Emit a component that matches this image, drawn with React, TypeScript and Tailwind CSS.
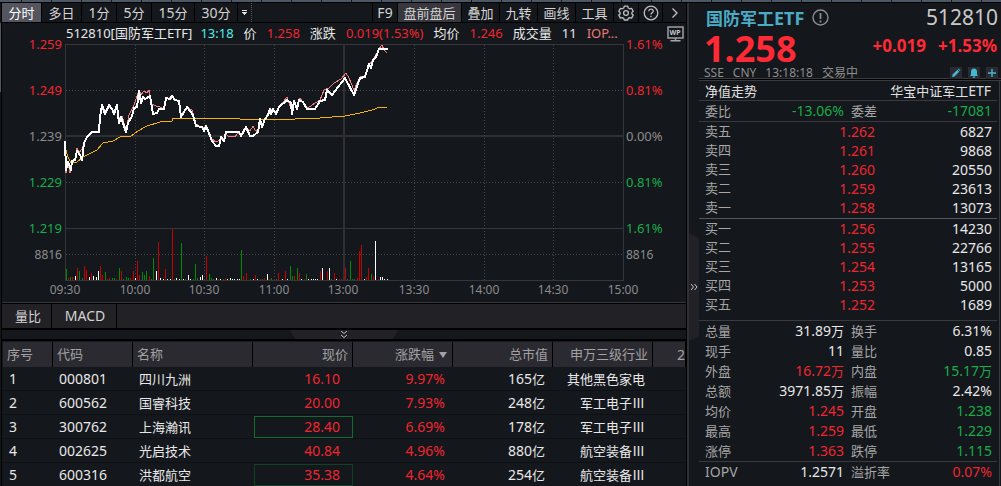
import React from 'react';

const UP = 'text-[#f0262f]';
const DOWN = 'text-[#18ad4a]';
const PLAIN = 'text-[#e8e8e8]';

// Chinese runs are set one pixel smaller than the digits around them
const Mixed = ({ text }: { text: string }) => (
  <>
    {text.split(/([\u2160-\u9fff]+)/).map((part, i) =>
      i % 2 ? <span key={i} className="text-[13px]">{part}</span> : part
    )}
  </>
);

const periods = [
  { label: '分时', width: 'w-[40px]' },
  { label: '多日', width: 'w-[40px]' },
  { label: '1分', width: 'w-[35px]' },
  { label: '5分', width: 'w-[35px]' },
  { label: '15分', width: 'w-[43px]' },
  { label: '30分', width: 'w-[43px]' },
];

const tools = [
  { label: 'F9', width: 'w-[25px]' },
  { label: '盘前盘后', width: 'w-[64px]' },
  { label: '叠加', width: 'w-[38px]' },
  { label: '九转', width: 'w-[38px]' },
  { label: '画线', width: 'w-[38px]' },
  { label: '工具', width: 'w-[38px]' },
];

const TopBar = () => (
  <nav className="flex h-[20px] border-b border-black text-[14px] leading-none text-[#d4d4d4]">
    {periods.map((p, i) => (
      <button
        key={p.label}
        className={`${p.width} flex shrink-0 items-center justify-center border-r border-black ${i === 0 ? 'bg-[#55555f] text-white' : ''}`}
      >
        <span><Mixed text={p.label} /></span>
      </button>
    ))}
    <button aria-label="更多周期" className="flex w-[14px] items-center justify-center border-r border-dotted border-[#555]">
      <svg width="7" height="6" viewBox="0 0 7 6" fill="#e0e0e0" shapeRendering="crispEdges">
        <path d="M1 0h5v1H1zM1 2h5v1H1zM2 3h3v1H2zM3 4h1v1H3z" />
      </svg>
    </button>
    <div className="flex-1 border-r border-black" />
    {tools.map((t, i) => (
      <button
        key={t.label}
        className={`${t.width} flex shrink-0 items-center justify-center border-r border-black ${i === 1 ? 'bg-[#37373d]' : ''}`}
      >
        <span><Mixed text={t.label} /></span>
      </button>
    ))}
    <button aria-label="设置" className="flex w-[25px] items-center justify-center border-r border-black">
      <svg width="16" height="16" viewBox="0 0 16 16" fill="none" stroke="#bdbdbd" strokeWidth="1.3">
        <path d="M6.3 1.2h3.4l.6 1.8 1.4.8 1.9-.5 1.6 3-1.3 1.2v1.400l1.300 1.200-1.600 3-1.900-.5-1.400.8-.6 1.600H6.300l-.6-1.600-1.400-.8-1.900.5-1.600-3 1.300-1.200V7.500L.8 6.300l1.600-3 1.900.5L5.700 3z" strokeLinejoin="round" />
        <circle cx="8" cy="8" r="2.4" />
      </svg>
    </button>
    <button aria-label="帮助" className="flex w-[24px] items-center justify-center border-r border-black">
      <svg width="16" height="16" viewBox="0 0 16 16" fill="none" stroke="#bdbdbd" strokeWidth="1.3">
        <circle cx="8" cy="8" r="6.8" />
        <path d="M5.8 6.3c0-1.3 1-2.1 2.2-2.1s2.2.8 2.2 2c0 1.5-2.2 1.7-2.2 3.300M8 10.800v1.400" />
      </svg>
    </button>
    <button aria-label="展开" className="flex w-[23px] items-center justify-center">
      <svg width="8" height="12" viewBox="0 0 8 12" fill="none" stroke="#c4c4c4" strokeWidth="1.3">
        <path d="M1.5 1.500L6 6l-4.500 4.500" />
      </svg>
    </button>
  </nav>
);

const InfoLine = () => (
  <div className="flex h-[21px] items-center justify-between pl-[64px] pr-[2px] text-[13px] leading-none">
    <div className="flex items-center gap-[10px] whitespace-nowrap text-[#e8e8e8]">
      <span className="-mr-[2px]">512810[国防军工ETF]</span>
      <span className="text-[#4ff0e8]">13:18</span>
      <span>价</span>
      <span className={UP}>1.258</span>
      <span>涨跌</span>
      <span className={UP}>0.019(1.53%)</span>
      <span>均价</span>
      <span className={UP}>1.246</span>
      <span>成交量</span>
      <span>11</span>
      <span className="text-[#f07878]">IOP...</span>
    </div>
    <svg width="17" height="16" viewBox="0 0 17 16" fill="none" stroke="#a8a8a8">
      <rect x="1" y="1" width="15" height="11" strokeWidth="1.4" />
      <path d="M8.5 12v2.500M3.500 14.800h10" strokeWidth="1.4" />
      <text x="8" y="9" textAnchor="middle" fontSize="7" fontWeight="700" fill="#c4c4c4" stroke="none">WP</text>
    </svg>
  </div>
);

const pricePoints =
  '65,141 66,170 68,162 71,170 72,161 75,160 77,151 80,155 82,160 84,143 87,137 91,133 92,132 99,132 100,117 102,105 105,114 109,105 112,109 114,114 117,105 119,123 121,117 126,132 128,123 132,116 134,108 137,107 139,91 141,103 143,97 145,99 150,96 153,114 157,113 159,109 164,109 166,98 170,99 172,96 175,100 179,101 181,117 187,107 193,115 196,126 202,127 204,131 206,126 209,133 212,141 216,146 219,146 221,137 224,141 226,132 239,132 241,136 246,127 250,136 253,136 258,132 260,119 262,127 265,119 268,115 270,109 271,114 273,109 276,114 279,107 287,100 291,103 292,114 294,101 297,109 299,100 303,102 307,109 315,109 320,101 325,100 327,90 332,95 345,78 354,95 360,78 365,77 369,64 371,68 373,60 376,57 379,49 388,49';

const iopvPoints =
  '65,142 66,173 68,163 70,173 72,162 75,160 77,148 79,153 82,149 84,143 87,137 92,132 99,131 102,106 105,112 109,107 114,112 117,106 119,118 122,116 126,130 129,115 134,105 139,90 141,95 144,91 147,93 149,90 152,104 156,106 160,107 164,109 166,99 172,97 179,102 181,115 187,107 192,110 196,124 202,128 206,127 212,139 216,142 220,140 224,138 226,134 229,137 232,136 235,137 238,133 242,134 246,127 250,131 253,126 255,130 258,132 260,120 262,126 270,109 276,112 279,107 287,97 292,112 294,102 297,107 300,98 307,108 311,106 315,103 320,100 324,90 329,88 334,83 341,79 346,73 349,78 354,90 360,77 365,76 369,65 373,60 379,49 382,45 384,50 387,53';

const averagePoints =
  '66,150 68,157 71,163 77,162 83,157 97,150 103,143 113,141 120,137 131,136 138,131 147,126 160,122 172,121 173,118 207,118 240,119 295,119 320,118 345,116 360,113 372,110 380,107 387,107';

// x, height, colour key
const volumes =
  '66,11,g 68,2,r 70,3,g 72,3,r 75,4,w 77,12,r 79,9,g 82,2,g 84,14,r 86,10,r 89,3,w 91,7,r 93,4,w 96,3,w 98,9,w 100,14,r 102,5,r 105,8,g 107,1,r 109,2,r 112,2,g 114,2,g 116,1,r 119,12,g 121,9,r 123,1,g 126,3,g 128,2,g 130,2,r 133,9,r 135,2,w 137,19,r 139,5,r 142,8,g 144,5,g 146,9,g 149,4,r 151,1,g 153,22,g 156,9,w 158,38,r 160,2,w 163,1,w 165,11,r 167,1,w 170,1,w 172,51,r 174,1,g 176,2,w 179,1,w 181,37,g 183,1,w 185,1,g 188,5,w 190,1,w 193,1,g 195,16,g 197,2,g 200,3,w 202,5,w 204,1,g 206,24,r 209,6,g 211,2,g 213,1,g 216,2,w 218,1,r 220,1,w 223,1,g 225,2,r 227,1,w 230,2,w 232,1,w 234,1,w 237,1,w 239,1,w 241,30,g 243,4,r 246,7,r 250,1,g 253,1,w 255,5,r 257,1,w 260,1,r 262,1,g 264,2,r 267,6,w 269,1,r 271,2,g 274,1,r 276,1,g 278,7,r 282,1,w 285,9,r 287,1,w 290,14,g 292,4,g 294,4,r 297,12,g 299,7,r 301,1,w 304,1,r 306,6,g 308,1,w 311,1,w 313,1,w 315,1,w 317,1,w 320,9,r 322,12,w 327,9,r 329,12,w 331,1,g 334,7,r 336,1,w 339,1,r 341,1,r 345,12,r 347,1,g 350,19,g 352,1,g 354,1,g 357,2,r 359,29,r 361,35,r 364,1,w 366,3,r 368,12,r 371,6,g 373,4,r 375,39,w 378,1,r 380,3,w 382,3,w 384,1,w 387,1,w'
    .split(' ')
    .map((v) => v.split(','));

const barColors: Record<string, string> = { r: '#c80000', g: '#008c00', w: '#ffffff' };

const priceAxis = [
  { y: 44, price: '1.259', pct: '1.61%', fill: '#f0262f' },
  { y: 90, price: '1.249', pct: '0.81%', fill: '#f0262f' },
  { y: 136, price: '1.239', pct: '0.00%', fill: '#8c8c8c' },
  { y: 182, price: '1.229', pct: '0.81%', fill: '#18ad4a' },
  { y: 228, price: '1.219', pct: '1.61%', fill: '#18ad4a' },
  { y: 254, price: '8816', pct: '8816', fill: '#8c8c8c' },
];

const timeAxis = [
  { x: 65, t: '09:30' },
  { x: 135, t: '10:00' },
  { x: 204, t: '10:30' },
  { x: 274, t: '11:00' },
  { x: 343, t: '13:00' },
  { x: 414, t: '13:30' },
  { x: 484, t: '14:00' },
  { x: 553, t: '14:30' },
  { x: 623, t: '15:00' },
];

const IntradayChart = () => (
  <svg viewBox="2 44 684 258" className="block h-auto w-full overflow-visible" role="img" aria-label="分时走势">
    <g shapeRendering="crispEdges">
      <g fill="#36363a">
        <rect x="65" y="44" width="558" height="1" />
        <rect x="65" y="228" width="558" height="1" />
        <rect x="65" y="280" width="559" height="1" />
        <rect x="65" y="44" width="1" height="236" />
        <rect x="623" y="44" width="1" height="236" />
        <rect x="65" y="135" width="558" height="2" fill="#302f34" />
        <rect x="343" y="44" width="2" height="236" fill="#302f34" />
      </g>
      {[90, 182, 254].map((y) => (
        <path key={y} d={`M66 ${y}.5H623`} stroke="#46464b" strokeDasharray="1 2" />
      ))}
      {[135, 204, 274, 414, 484, 553].map((x) => (
        <path key={x} d={`M${x}.5 45V280`} stroke="#46464b" strokeDasharray="1 2" />
      ))}
      {volumes.map(([x, h, c]) => (
        <rect key={x} x={x} y={280 - Number(h)} width="1" height={h} fill={barColors[c]} />
      ))}
      <polyline points={averagePoints} fill="none" stroke="#f5b20e" />
      <polyline points={iopvPoints} fill="none" stroke="#f08080" />
      <polyline points={pricePoints} fill="none" stroke="#ffffff" strokeWidth="2" strokeLinejoin="round" />
    </g>
    <g fontSize="12">
      {priceAxis.map((a) => (
        <React.Fragment key={a.y}>
          <text x="62" y={a.y + 5} textAnchor="end" fill={a.fill} fontSize={a.y === 254 ? 12 : 13}>{a.price}</text>
          <text x="626" y={a.y + 5} fill={a.fill} fontSize={a.y === 254 ? 12 : 13}>{a.pct}</text>
        </React.Fragment>
      ))}
      {timeAxis.map((a) => (
        <text key={a.t} x={a.x} y="294" textAnchor="middle" fill="#8c8c8c">{a.t}</text>
      ))}
    </g>
  </svg>
);

const stocks = [
  { code: '000801', name: '四川九洲', price: '16.10', pct: '9.97%', cap: '165亿', industry: '其他黑色家电', box: '' },
  { code: '600562', name: '国睿科技', price: '20.00', pct: '7.93%', cap: '248亿', industry: '军工电子Ⅲ', box: '' },
  { code: '300762', name: '上海瀚讯', price: '28.40', pct: '6.69%', cap: '178亿', industry: '军工电子Ⅲ', box: 'border-[#156a33]' },
  { code: '002625', name: '光启技术', price: '40.84', pct: '4.96%', cap: '880亿', industry: '航空装备Ⅲ', box: '' },
  { code: '600316', name: '洪都航空', price: '35.38', pct: '4.64%', cap: '254亿', industry: '航空装备Ⅲ', box: 'border-[#10421f]' },
];

const StockTable = () => (
  <div className="overflow-hidden pl-px">
    <table className="w-full table-fixed border-separate border-spacing-0 text-[14px] leading-none text-[#e8e8e8]">
      <colgroup>
        <col className="w-[50px]" />
        <col className="w-[80px]" />
        <col className="w-[120px]" />
        <col className="w-[100px]" />
        <col className="w-[100px]" />
        <col className="w-[100px]" />
        <col className="w-[100px]" />
        <col />
      </colgroup>
      <thead>
        <tr className="h-[25px] bg-[#2b2a30] text-[13px] text-[#a2a2a4] [&>th]:border-r [&>th]:border-black [&>th]:p-0 [&>th]:font-normal">
          <th className="text-left"><span className="pl-1">序号</span></th>
          <th className="text-left"><span className="pl-1">代码</span></th>
          <th className="text-left"><span className="pl-1">名称</span></th>
          <th className="text-right"><span className="pr-1">现价</span></th>
          <th className="text-right">
            <span className="flex items-center justify-end gap-[5px] pr-[5px]">
              涨跌幅
              <svg width="8" height="6" viewBox="0 0 8 6" fill="#a2a2a4"><path d="M0 0h8L4 6z" /></svg>
            </span>
          </th>
          <th className="text-right"><span className="pr-1">总市值</span></th>
          <th className="text-right"><span className="pr-1">申万三级行业</span></th>
          <th className="overflow-hidden text-right text-[14px]">2</th>
        </tr>
      </thead>
      <tbody>
        {stocks.map((s, i) => (
          <tr key={s.code} className="h-[24px] [&>td]:border-b [&>td]:border-[#0e1014] [&>td]:p-0">
            <td><span className="pl-[6px]">{i + 1}</span></td>
            <td><span className="pl-[6px]">{s.code}</span></td>
            <td><span className="pl-[6px] text-[13px]">{s.name}</span></td>
            <td className={UP}>
              <div className={`ml-px flex h-[22px] items-center justify-end border pr-3 ${s.box || 'border-transparent'}`}>{s.price}</div>
            </td>
            <td className={`text-right ${UP}`}><span className="pr-2">{s.pct}</span></td>
            <td className="text-right"><span className="pr-2"><Mixed text={s.cap} /></span></td>
            <td className="text-right"><span className="pr-2 font-['Noto_Sans_CJK_SC',sans-serif] text-[13px]">{s.industry}</span></td>
            <td />
          </tr>
        ))}
      </tbody>
    </table>
  </div>
);

const asks = [
  ['卖五', '1.262', '6827'],
  ['卖四', '1.261', '9868'],
  ['卖三', '1.260', '20550'],
  ['卖二', '1.259', '23613'],
  ['卖一', '1.258', '13073'],
];

const bids = [
  ['买一', '1.256', '14230'],
  ['买二', '1.255', '22766'],
  ['买三', '1.254', '13165'],
  ['买四', '1.253', '5000'],
  ['买五', '1.252', '1689'],
];

const OrderBook = ({ rows }: { rows: string[][] }) => (
  <table className="w-full table-fixed text-[14px] leading-none">
    <tbody>
      {rows.map(([label, price, size]) => (
        <tr key={label} className="h-[19px] [&>*]:p-0">
          <th className="w-[60px] text-left text-[13px] font-normal text-[#a6a6a6]"><span className="pl-[6px]">{label}</span></th>
          <td className={`w-[116px] text-right ${UP}`}>{price}</td>
          <td className="text-right text-[#e8e8e8]"><span className="pr-[5px]">{size}</span></td>
        </tr>
      ))}
    </tbody>
  </table>
);

const stats = [
  { a: '总量', av: '31.89万', ac: PLAIN, b: '换手', bv: '6.31%', bc: PLAIN },
  { a: '现手', av: '11', ac: PLAIN, b: '量比', bv: '0.85', bc: PLAIN },
  { a: '外盘', av: '16.72万', ac: UP, b: '内盘', bv: '15.17万', bc: DOWN },
  { a: '总额', av: '3971.85万', ac: PLAIN, b: '振幅', bv: '2.42%', bc: PLAIN },
  { a: '均价', av: '1.245', ac: UP, b: '开盘', bv: '1.238', bc: DOWN },
  { a: '最高', av: '1.259', ac: UP, b: '最低', bv: '1.229', bc: DOWN },
  { a: '涨停', av: '1.363', ac: UP, b: '跌停', bv: '1.115', bc: DOWN },
];

type Stat = (typeof stats)[number];

const StatRow = ({ s }: { s: Stat }) => (
  <div className="flex h-[20px] items-center pl-[6px] pr-[5px] text-[14px] leading-none text-[#a6a6a6]">
    <div className="flex w-[139px] items-center justify-between">
      <span><Mixed text={s.a} /></span>
      <span className={s.ac}><Mixed text={s.av} /></span>
    </div>
    <div className="flex flex-1 items-center justify-between pl-[7px]">
      <span><Mixed text={s.b} /></span>
      <span className={s.bc}><Mixed text={s.bv} /></span>
    </div>
  </div>
);

const QuoteHeader = () => (
  <header className="h-[75px] pl-[5px] pr-[3px]">
    <div className="flex h-[29px] items-center justify-between leading-none">
      <h1 className="flex items-center gap-2 pl-[2px] text-[17px] font-bold text-[#4bacc6]">
        <span>国防军工<span className="text-[18px]">ETF</span></span>
        <svg width="17" height="17" viewBox="0 0 17 17" fill="none" stroke="#8c8c8c" strokeWidth="1.4">
          <circle cx="8.5" cy="8.5" r="7.5" />
          <path d="M8.5 4v6M8.500 11.500v2" strokeWidth="1.8" />
        </svg>
      </h1>
      <span className="text-[21px] text-[#c8c8c8]">512810</span>
    </div>
    <div className="flex h-[34px] justify-between font-bold text-[#ff2a35]">
      <span className="text-[36px] leading-[34px]">1.258</span>
      <span className="flex gap-3 pr-px text-[17px] leading-[28px]">
        <span>+0.019</span>
        <span>+1.53%</span>
      </span>
    </div>
    <div className="flex h-[14px] items-center justify-between text-[12px] leading-none text-[#8e8e8e]">
      <div className="flex gap-[9px]">
        <span>SSE</span>
        <span>CNY</span>
        <span>13:18:18</span>
        <span>交易中</span>
      </div>
      <div className="flex gap-[6px]">
        <button aria-label="编辑" className="bg-[#2b2a30]">
          <svg width="12" height="12" viewBox="0 0 12 12" fill="#41b8d0"><path d="M2 10l.6-2.5 4.700-4.700 1.900 1.900L4.500 9.400zM7.900 2.200l.7-.7 1.900 1.900-.7.7z" /></svg>
        </button>
        <button aria-label="提醒" className="bg-[#2b2a30]">
          <svg width="12" height="12" viewBox="0 0 12 12" fill="#41b8d0"><path d="M6 1.5C3.8 1.5 3 3 3 4.700V7.500L2 9h8L9 7.500V4.700C9 3 8.200 1.500 6 1.500zM4.800 9.500h2.400v1.200H4.800z" /></svg>
        </button>
        <button aria-label="添加" className="bg-[#2b2a30]">
          <svg width="12" height="12" viewBox="0 0 12 12" stroke="#41b8d0" strokeWidth="1.4"><path d="M2 6h8M6 2v8" /></svg>
        </button>
      </div>
    </div>
  </header>
);

const App = () => {
  return (
    <div className="flex h-screen flex-col overflow-hidden bg-[#14171c] font-['Noto_Sans','Noto_Sans_CJK_SC',sans-serif]">
      <div className="h-[3px] shrink-0 border-b border-black bg-[repeating-linear-gradient(90deg,#4d5866_0_21px,#14171c_21px_22px,#4d5866_22px_30px)]" />
      <div className="flex min-h-0 flex-1">
        <div className="w-[2px] shrink-0 border-r border-black">
          <div className="mt-[20px] h-[69px] bg-[#55555f]" />
        </div>

        <main className="min-w-0 flex-1">
          <TopBar />
          <InfoLine />
          <IntradayChart />
          <div className="border-t border-[#36363a]">
            <div className="flex h-[27px] border-b-2 border-t border-black bg-[#222126] text-[14px] leading-none text-[#d4d4d4]">
              <button className="w-[50px] border-r border-black pl-[3px] text-[13px]">量比</button>
              <button className="w-[65px] border-r border-black pl-[2px]">MACD</button>
            </div>
          </div>
          <div className="flex h-[9px] justify-center">
            <button aria-label="收起" className="block">
              <svg width="108" height="9" viewBox="0 0 108 9" fill="none">
                <path d="M0 0h108l-5 9H5z" fill="#222126" />
                <path d="M51 1l3 2.5L57 1M51 5l3 2.500L57 5" stroke="#bdbdbd" />
              </svg>
            </button>
          </div>
          <div className="border-t-2 border-black pt-px">
            <StockTable />
          </div>
        </main>

        <div className="flex w-[13px] shrink-0 border-l border-black">
          <div className="w-[2px] bg-[#303034]" />
          <button aria-label="折叠侧栏" className="mt-[230px] h-[108px] w-[10px]">
            <svg width="10" height="108" viewBox="0 0 10 108" fill="none">
              <path d="M0 0l10 5v98l-10 5z" fill="#222126" />
              <path d="M2 51l2.5 3L2 57M5.500 51L8 54l-2.500 3" stroke="#c8c8c8" />
            </svg>
          </button>
        </div>

        <aside className="w-[302px] shrink-0">
          <QuoteHeader />
          <div className="h-[3px] border-b border-t border-[#3a3a3e] bg-black" />
          <div className="mr-px h-full border-r border-[#3a3a3e] pr-[2px]">
            <div className="flex h-[20px] items-center justify-between border-b border-[#3a3a3e] px-[6px] text-[14px] leading-none text-[#e0e0e0]">
              <span><Mixed text="净值走势" /></span>
              <span><Mixed text="华宝中证军工ETF" /></span>
            </div>
            <div className="border-b border-[#3a3a3e]">
              <StatRow s={{ a: '委比', av: '-13.06%', ac: DOWN, b: '委差', bv: '-17081', bc: DOWN }} />
            </div>
            <div className="border-b border-[#55555f] pb-px">
              <OrderBook rows={asks} />
            </div>
            <div className="border-b border-[#3a3a3e] pb-[6px]">
              <OrderBook rows={bids} />
            </div>
            <div className="border-b border-[#3a3a3e]">
              {stats.map((s) => (
                <StatRow key={s.a} s={s} />
              ))}
            </div>
            <StatRow s={{ a: 'IOPV', av: '1.2571', ac: PLAIN, b: '溢折率', bv: '0.07%', bc: UP }} />
          </div>
        </aside>
      </div>
    </div>
  );
};

export default App;
